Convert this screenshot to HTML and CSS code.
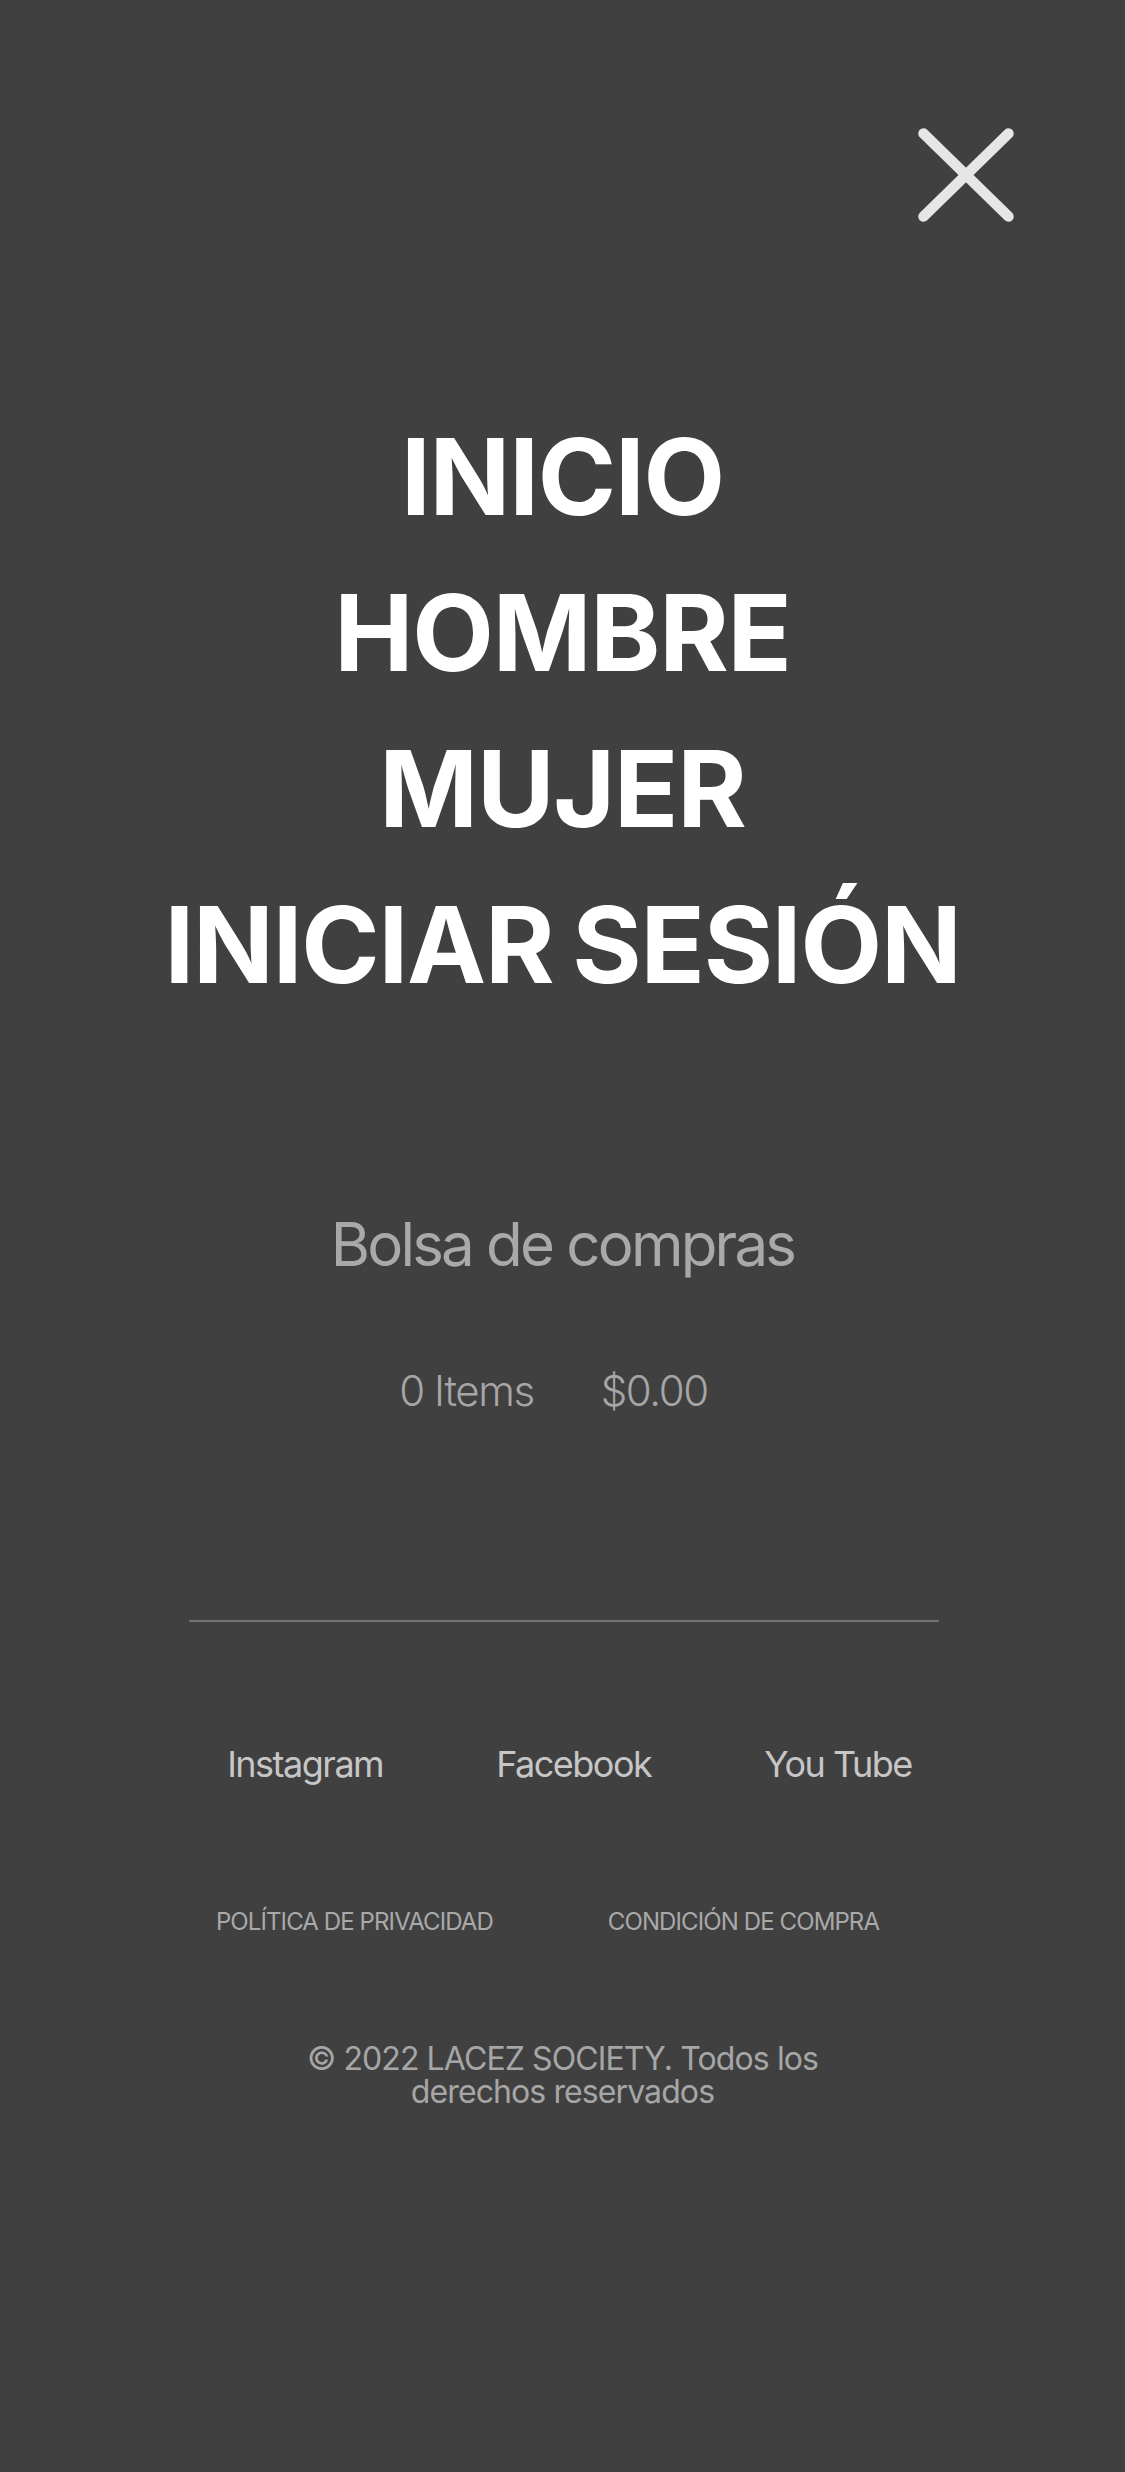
FILE: index.html
```html
<!DOCTYPE html>
<html lang="es">
<head>
<meta charset="utf-8">
<title>Menú</title>
<link rel="stylesheet" href="styles.css">
</head>
<body>
<div class="screen">
  <header class="topbar">
    <button class="close" aria-label="Cerrar">
      <svg width="96" height="96" viewBox="0 0 96 96" fill="none" stroke="#e6e6e6" stroke-width="10.5" stroke-linecap="round">
        <path d="M5.5 5.5 L90.5 88.5"/>
        <path d="M90.5 5.5 L5.5 88.5"/>
      </svg>
    </button>
  </header>

  <nav class="menu">
    <a href="#">INICIO</a>
    <a href="#">HOMBRE</a>
    <a href="#">MUJER</a>
    <a href="#">INICIAR SESIÓN</a>
  </nav>

  <section class="bag">
    <h2 class="bag-title">Bolsa de compras</h2>
    <div class="bag-info">
      <span>0 Items</span>
      <span>$0.00</span>
    </div>
  </section>

  <hr class="divider">

  <footer class="footer">
    <div class="social">
      <a href="#">Instagram</a>
      <a href="#">Facebook</a>
      <a href="#">You Tube</a>
    </div>
    <div class="legal">
      <a href="#">POLÍTICA DE PRIVACIDAD</a>
      <a href="#">CONDICIÓN DE COMPRA</a>
    </div>
    <p class="copy">© 2022 LACEZ SOCIETY. Todos los derechos reservados</p>
  </footer>
</div>
</body>
</html>
```

FILE: styles.css
```css
* { box-sizing: border-box; }

html, body {
  margin: 0;
  padding: 0;
  background: #404040;
}

body {
  font-family: Inter, "Noto Sans", "Liberation Sans", sans-serif;
  color: #ffffff;
  min-height: 2472px;
}

a { text-decoration: none; color: inherit; }

.screen {
  display: flex;
  flex-direction: column;
  align-items: center;
  width: 1125px;
}

.topbar {
  align-self: stretch;
  display: flex;
  justify-content: flex-end;
  padding: 128px 111px 0 0;
}

.close {
  display: block;
  width: 96px;
  height: 96px;
  padding: 0;
  border: 0;
  background: none;
  cursor: pointer;
}

.close svg { display: block; }

.menu {
  margin-top: 175px;
  display: flex;
  flex-direction: column;
  align-items: center;
  font-size: 106px;
  font-weight: 700;
  line-height: 156px;
  letter-spacing: -1.2px;
  word-spacing: -5px;
  color: #ffffff;
}

.bag {
  margin-top: 185px;
  display: flex;
  flex-direction: column;
  align-items: center;
}

.bag-title {
  margin: 0;
  font-size: 60px;
  font-weight: 400;
  line-height: 72px;
  letter-spacing: -2.8px;
  color: #a9a9a9;
}

.bag-info {
  margin-top: 86px;
  display: flex;
  gap: 67px;
  padding-right: 18px;
  font-size: 42px;
  font-weight: 300;
  line-height: 50px;
  letter-spacing: -1.4px;
  color: #a6a6a6;
}

.divider {
  margin: 204px 0 0;
  width: 750px;
  height: 2px;
  border: 0;
  background: #727272;
  align-self: center;
  position: relative;
  left: 1px;
}

.footer {
  display: flex;
  flex-direction: column;
  align-items: center;
}

.social {
  margin-top: 121px;
  display: flex;
  gap: 113px;
  padding-left: 14px;
  font-size: 36px;
  line-height: 43px;
  letter-spacing: -1.5px;
  color: #c6c6c6;
}

.legal {
  margin-top: 121px;
  display: flex;
  gap: 115px;
  padding-right: 30px;
  font-size: 24px;
  line-height: 29px;
  letter-spacing: -0.9px;
  color: #a9a9a9;
}

.copy {
  margin: 106px 0 0;
  max-width: 520px;
  text-align: center;
  font-size: 32px;
  line-height: 33px;
  letter-spacing: -0.9px;
  color: #a6a6a6;
}
```
